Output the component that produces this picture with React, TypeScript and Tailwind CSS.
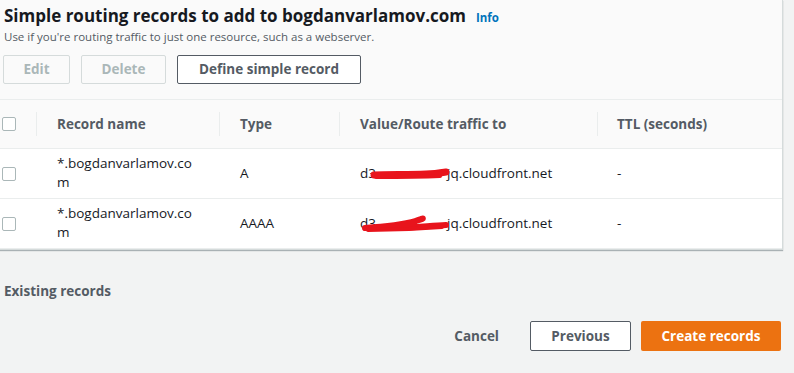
import React from "react";

const font = { fontFamily: '"Open Sans", "Noto Sans", Arial, sans-serif' };

function Checkbox() {
  return <div className="w-[14px] h-[14px] border border-[#aab7b8] rounded-[2px] bg-white" />;
}

function Sep() {
  return <div className="absolute left-0 top-[12px] bottom-[12px] w-px bg-[#eaeded]" />;
}

function Scribble({ variant }: { variant: number }) {
  if (variant === 1) {
    return (
      <svg className="absolute left-[368px] top-[-9px]" width="84" height="18" viewBox="0 0 84 18">
        <path d="M6 10 C 20 9, 40 10, 58 9 C 66 9, 72 8, 78 7" stroke="#e8141c" strokeWidth="7" fill="none" strokeLinecap="round" />
        <path d="M8 12 C 30 12, 50 12, 72 11" stroke="#e8141c" strokeWidth="4" fill="none" strokeLinecap="round" />
      </svg>
    );
  }
  return (
    <svg className="absolute left-[362px] top-[-14px]" width="90" height="26" viewBox="0 0 90 26">
      <path d="M3 18 C 20 17, 40 15, 54 11 C 60 9, 63 8, 59 9 C 50 12, 40 16, 32 18 C 48 18, 66 16, 84 15" stroke="#e8141c" strokeWidth="6" fill="none" strokeLinecap="round" strokeLinejoin="round" />
      <path d="M6 20 C 30 20, 55 19, 80 17" stroke="#e8141c" strokeWidth="4" fill="none" strokeLinecap="round" />
    </svg>
  );
}

function Row({ type, variant }: { type: string; variant: number }) {
  return (
    <div className="relative flex h-[50px] border-b border-[#eaeded] bg-white text-[13.5px] text-[#16191f]">
      <div className="w-[36px] flex items-center pl-[2px]">
        <Checkbox />
      </div>
      <div className="w-[183px] pl-[21px] flex flex-col justify-center leading-[19px] pb-[1px]">
        <span>*.bogdanvarlamov.co</span>
        <span>m</span>
      </div>
      <div className="w-[120px] pl-[21px] flex items-center">{type}</div>
      <div className="w-[258px] pl-[21px] flex items-center">
        <span>d3</span>
        <span className="inline-block w-[71px]" />
        <span>jq.cloudfront.net</span>
      </div>
      <div className="flex-1 pl-[20px] flex items-center">-</div>
      <div className="absolute left-0 top-1/2 pointer-events-none">
        <Scribble variant={variant} />
      </div>
    </div>
  );
}

export default function App() {
  return (
    <div className="w-[794px] h-[373px] bg-[#f2f3f3] overflow-hidden" style={font}>
      <div className="w-[783px] bg-[#fafafa] border-r border-b border-[#d5dbdb] shadow-[0_1px_1px_rgba(0,28,36,0.3)]">
        <div className="pl-[4px] pt-[4px] h-[100px] border-b border-[#eaeded]">
          <div className="flex items-baseline">
            <h1 className="text-[17px] font-bold text-[#16191f] leading-[24px]">
              Simple routing records to add to bogdanvarlamov.com
            </h1>
            <span className="ml-[10px] text-[11.5px] font-bold text-[#0073bb]">Info</span>
          </div>
          <p className="text-[11.5px] text-[#545b64] leading-[16px] mt-[1px]">
            Use if you're routing traffic to just one resource, such as a webserver.
          </p>
          <div className="flex gap-[11px] mt-[10px] -ml-[1px] text-[13.5px] font-bold">
            <button className="w-[67px] h-[29px] border border-[#d5dbdb] rounded-[2px] text-[#aab7b8] bg-[#fafafa]">Edit</button>
            <button className="w-[85px] h-[29px] border border-[#d5dbdb] rounded-[2px] text-[#aab7b8] bg-[#fafafa]">Delete</button>
            <button className="w-[184px] h-[29px] border border-[#545b64] rounded-[2px] text-[#545b64] bg-white">Define simple record</button>
          </div>
        </div>
        <div className="flex h-[49px] border-b border-[#eaeded] bg-[#fafafa] text-[13.5px] font-bold text-[#545b64]">
          <div className="w-[36px] flex items-center pl-[2px]">
            <Checkbox />
          </div>
          <div className="relative w-[183px] pl-[21px] flex items-center"><Sep />Record name</div>
          <div className="relative w-[120px] pl-[21px] flex items-center"><Sep />Type</div>
          <div className="relative w-[258px] pl-[21px] flex items-center"><Sep />Value/Route traffic to</div>
          <div className="relative flex-1 pl-[20px] flex items-center"><Sep />TTL (seconds)</div>
        </div>
        <Row type="A" variant={1} />
        <Row type="AAAA" variant={2} />
      </div>
      <div className="pl-[4px] pt-[31px] text-[13.5px] font-bold text-[#545b64]">Existing records</div>
      <div className="flex justify-end items-center mt-[20px] w-[783px] pr-[2px] text-[13.5px] font-bold">
        <span className="text-[#545b64] mr-[31px]">Cancel</span>
        <button className="w-[101px] h-[30px] border border-[#545b64] rounded-[2px] bg-white text-[#545b64] mr-[10px]">Previous</button>
        <button className="w-[140px] h-[30px] rounded-[2px] bg-[#ec7211] text-white">Create records</button>
      </div>
    </div>
  );
}
